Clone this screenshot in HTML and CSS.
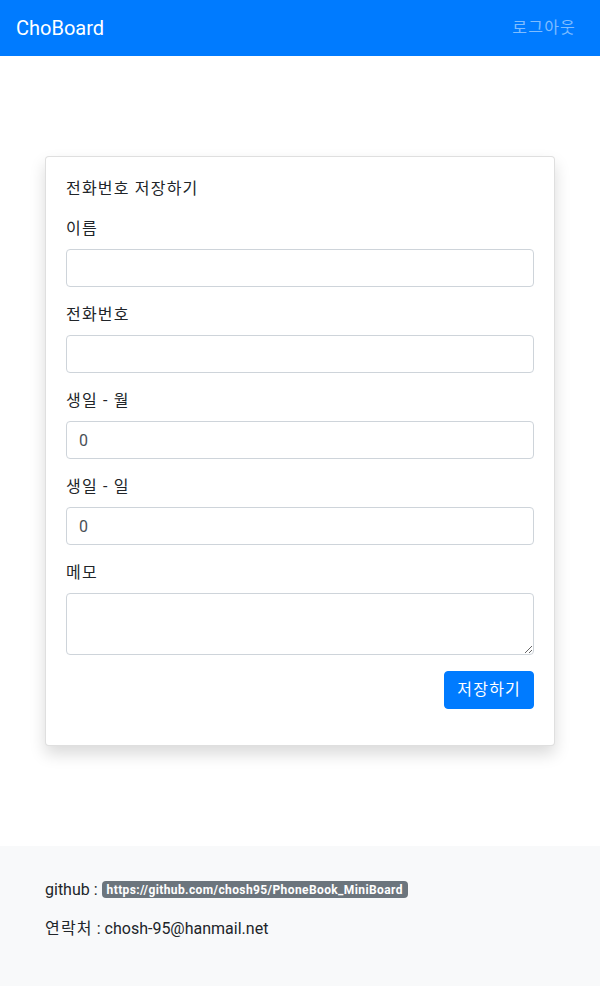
FILE: index.html
```
<!DOCTYPE html>
<html lang="ko">
<head>
<meta charset="utf-8">
<title>ChoBoard</title>
<link rel="stylesheet" href="styles.css">
</head>
<body>
<nav class="navbar">
  <a class="brand" href="#">ChoBoard</a>
  <a class="nav-link ko" href="#">로그아웃</a>
</nav>
<main class="main">
  <div class="card">
    <div class="card-body">
      <h5 class="card-title ko">전화번호 저장하기</h5>
      <form class="form">
        <div class="form-group">
          <label class="label ko">이름</label>
          <input class="control" type="text">
        </div>
        <div class="form-group">
          <label class="label ko">전화번호</label>
          <input class="control" type="text">
        </div>
        <div class="form-group">
          <label class="label ko">생일 - 월</label>
          <input class="control" type="number" value="0">
        </div>
        <div class="form-group">
          <label class="label ko">생일 - 일</label>
          <input class="control" type="number" value="0">
        </div>
        <div class="form-group">
          <label class="label ko">메모</label>
          <textarea class="control textarea" rows="2"></textarea>
        </div>
        <div class="form-group actions">
          <button class="btn ko" type="button">저장하기</button>
        </div>
      </form>
    </div>
  </div>
</main>
<footer class="footer">
  <p class="footer-line">github : <span class="badge">https://github.com/chosh95/PhoneBook_MiniBoard</span></p>
  <p class="footer-line"><span class="ko">연락처</span> : chosh-95@hanmail.net</p>
</footer>
</body>
</html>
```
FILE: styles.css
```
* { box-sizing: border-box; }
html, body {
  margin: 0;
  padding: 0;
}
body {
  font-family: Roboto, "Noto Sans CJK KR", sans-serif;
  font-size: 16px;
  line-height: 1.5;
  color: #212529;
  background: #fff;
}
.ko {
  letter-spacing: 1.2px;
}
.navbar {
  height: 56px;
  background: #007bff;
  display: flex;
  align-items: center;
  justify-content: space-between;
  padding: 0 16px;
}
.brand {
  color: #fff;
  font-size: 20px;
  text-decoration: none;
  line-height: 30px;
}
.nav-link {
  color: rgba(255, 255, 255, 0.5);
  text-decoration: none;
  padding: 8px;
}
.main {
  padding: 100px 45px 100px;
}
.card {
  border: 1px solid rgba(0, 0, 0, 0.125);
  border-radius: 4px;
  background: #fff;
  box-shadow: 0 8px 16px rgba(0, 0, 0, 0.15);
}
.card-body {
  padding: 20px;
}
.card-title {
  margin: 0 0 16px;
  font-size: 16px;
  font-weight: 400;
  line-height: 24px;
}
.form { margin: 0; }
.form-group {
  margin-bottom: 16px;
}
.label {
  display: block;
  margin-bottom: 8px;
  line-height: 24px;
}
.control {
  display: block;
  width: 100%;
  height: 38px;
  padding: 6px 12px;
  font-family: inherit;
  font-size: 16px;
  line-height: 24px;
  color: #495057;
  background: #fff;
  border: 1px solid #ced4da;
  border-radius: 4px;
  margin: 0;
  -moz-appearance: textfield;
}
.control::-webkit-outer-spin-button,
.control::-webkit-inner-spin-button {
  -webkit-appearance: none;
  margin: 0;
}
.textarea {
  height: 62px;
  resize: vertical;
}
.actions {
  display: flex;
  justify-content: flex-end;
}
.btn {
  height: 38px;
  padding: 6px 12px;
  font-family: inherit;
  font-size: 16px;
  line-height: 24px;
  color: #fff;
  background: #007bff;
  border: 1px solid #007bff;
  border-radius: 4px;
}
.footer {
  background: #f8f9fa;
  padding: 32px 45px 13px;
  height: 140px;
}
.footer-line {
  margin: 0 0 15px;
  line-height: 24px;
}
.badge {
  display: inline-block;
  background: #6c757d;
  color: #fff;
  font-size: 12px;
  font-weight: 700;
  letter-spacing: 0.4px;
  line-height: 12px;
  padding: 3px 5px 2px;
  border-radius: 4px;
  vertical-align: 1px;
}
```
